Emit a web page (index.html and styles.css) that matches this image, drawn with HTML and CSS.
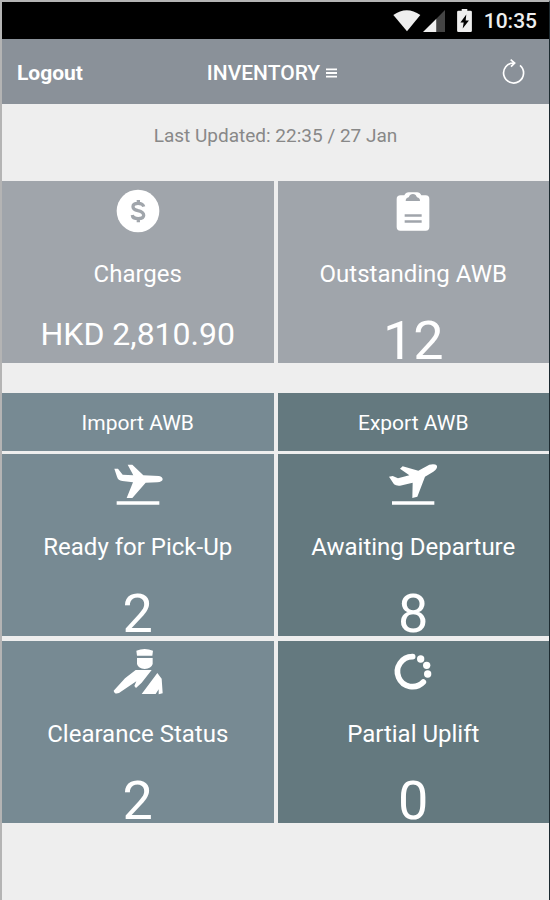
FILE: index.html
```
<!DOCTYPE html>
<html lang="en">
    <head>
        <meta charset="utf-8">
        <title>Inventory</title>
        <meta name="viewport" content="width=device-width, initial-scale=1.0">
        <link rel="stylesheet" href="styles.css">
    </head>
    <body>
        <div class="status">
            <svg class="wifi" viewBox="0 0 84 66"><path d="M1 15Q41-14 82 15L42 64Z"/></svg>
            <svg class="signal" viewBox="0 0 66 66"><path class="dim" d="M66 0V66H40V26Z"/><path d="M40 26V66H0Z"/></svg>
            <svg class="battery" viewBox="0 0 45 70"><path fill-rule="evenodd" d="M14 0H31V5H41Q45 5 45 9V66Q45 70 41 70H4Q0 70 0 66V9Q0 5 4 5H14ZM28 17L10 41H20L17 59L36 35H26Z"/></svg>
            <span>10:35</span>
        </div>
        <header>
            <button class="logout">Logout</button>
            <button class="title">INVENTORY
                <svg viewBox="0 0 12 12"><path d="M0 2H12M0 6H12M0 10H12"/></svg>
            </button>
            <button class="refresh" aria-label="Refresh">
                <svg viewBox="0 0 84 84"><path d="M63 19A30 30 0 1 1 45 12M35 2L47 12L36 23"/></svg>
            </button>
        </header>
        <p class="updated">Last Updated: 22:35 / 27 Jan</p>
        <main>
            <div class="row summary">
                <a class="tile" href="#charges">
                    <svg viewBox="0 0 150 150"><circle cx="75" cy="75" r="64"/><path class="cut" d="M92 62Q90 52 75 52Q60 52 60 62Q60 70 75 74Q92 78 92 88Q92 98 76 98Q59 98 58 87M76 42V52M76 98V109"/></svg>
                    <span class="label">Charges</span>
                    <span class="amount">HKD 2,810.90</span>
                </a>
                <a class="tile" href="#outstanding">
                    <svg viewBox="0 0 150 150"><path fill-rule="evenodd" d="M38 28H49Q53 19 62 19H87Q96 19 100 28H113Q124 28 124 39V123Q124 134 113 134H37Q26 134 26 123V39Q26 28 38 28ZM53 45H96Q96 36 87 34L83 27Q75 21 66 27L62 34Q53 36 53 45ZM50 85V92H101V85ZM50 103V110H101V103Z"/></svg>
                    <span class="label">Outstanding AWB</span>
                    <span class="value">12</span>
                </a>
            </div>
            <div class="row heads">
                <h2 class="import">Import AWB</h2>
                <h2 class="export">Export AWB</h2>
            </div>
            <div class="row awb">
                <a class="tile import" href="#pickup">
                    <svg viewBox="0 0 150 150"><path d="M4 29L15 29L29 47L61 49L44 17L58 17L91 49L138 51Q149 54 149 61Q148 69 133 70L98 71L58 117L41 117L60 70L28 66Q15 64 12 53Z"/><path d="M11 127H139V137H11Z"/></svg>
                    <span class="label">Ready for Pick-Up</span>
                    <span class="value">2</span>
                </a>
                <a class="tile export" href="#departure">
                    <svg viewBox="0 0 150 150"><path d="M3 53L14 51L30 58L64 49L36 29L44 22L91 35L124 17Q141 13 147 20Q149 29 136 38L111 53L88 113L73 117L74 71L36 80Q24 81 18 76Z"/><path d="M12 127H139V137H12Z"/></svg>
                    <span class="label">Awaiting Departure</span>
                    <span class="value">8</span>
                </a>
                <a class="tile import" href="#clearance">
                    <svg viewBox="0 0 150 150"><path d="M70 14Q95 4 120 14L118 29H72ZM72 36H119V54Q115 68 95 69Q76 68 72 54ZM68 72H116L86 110L69 126L64 120L70 106L18 141Q4 146 2 134L36 97ZM133 81L146 98L149 142L137 145L137 130L128 144H86Z"/></svg>
                    <span class="label">Clearance Status</span>
                    <span class="value">2</span>
                </a>
                <a class="tile export" href="#uplift">
                    <svg viewBox="0 0 150 150"><path class="arc" d="M74 32A45 45 0 1 0 106 108"/><circle cx="98" cy="39" r="11"/><circle cx="116" cy="58" r="11"/><circle cx="119" cy="84" r="11"/></svg>
                    <span class="label">Partial Uplift</span>
                    <span class="value">0</span>
                </a>
            </div>
        </main>
    </body>
</html>
```

FILE: styles.css
```
*{box-sizing:border-box}
html{background-color:#eee}
body{margin:0; min-height:100vh; border:solid #b4b4b4; border-width:2px 1px 0 2px; border-right-color:#1c2a30; font-family:Roboto, sans-serif; background-color:#eee; color:#fff}
svg{display:block; fill:currentColor}
.status{display:flex; align-items:center; justify-content:flex-end; height:37px; padding-right:12px; background-color:#000; color:#eee; font-size:21px; font-weight:500}
.wifi{width:28px; height:22px}
.signal{width:22px; height:22px; margin:0 12px 0 2px}
.signal .dim{fill:#444}
.battery{width:15px; height:23px; margin-right:12px}
header{display:grid; grid-template-columns:1fr auto 1fr; align-items:center; height:65px; padding:2px 22px 0 15px; background-color:#8a9199}
button{padding:0; border:0; background:none; color:inherit; font:500 21px/24px Roboto, sans-serif; cursor:pointer}
.logout{justify-self:start; font-weight:700}
.title{display:flex; align-items:center; gap:6px}
.title svg{width:11px; height:12px; fill:none; stroke:currentColor; stroke-width:2}
.refresh{justify-self:end}
.refresh svg{width:28px; height:28px; fill:none; stroke:currentColor; stroke-width:5}
.updated{margin:0; padding:20px 0 33px; color:#888; font-size:19px; line-height:24px; text-align:center}
.row{display:grid; grid-template-columns:1fr 1fr; gap:5px 4px}
.summary{margin-bottom:30px}
.heads{margin-bottom:3px}
h2{margin:0; padding-top:2px; font-size:21px; font-weight:400; line-height:56px; text-align:center}
.tile{display:flex; flex-direction:column; align-items:center; padding-top:5px; background-color:#a0a5ab; color:#fff; text-decoration:none}
.tile svg{width:50px; height:50px}
.cut{fill:none; stroke:#a0a5ab; stroke-width:10}
.arc{fill:none; stroke:currentColor; stroke-width:17; stroke-linecap:round}
.label{margin:23px 0 30px; font-size:24px; line-height:30px}
.value{font-size:54px; line-height:44px}
.amount{font-size:32px; line-height:30px}
.import{background-color:#778a93}
.export{background-color:#64797f}
```
